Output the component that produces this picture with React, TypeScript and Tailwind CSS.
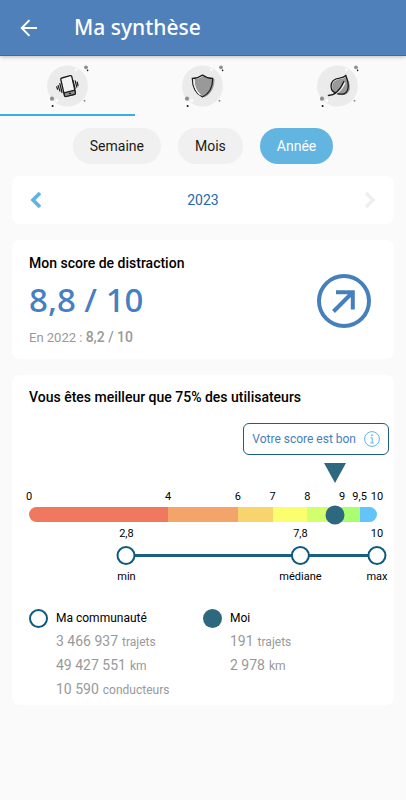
import type { ReactNode } from "react";

type Segment = { from: number; to: number; color: string };

const SEGMENTS: Segment[] = [
  { from: 0, to: 4, color: "#ef785f" },
  { from: 4, to: 6, color: "#f3a468" },
  { from: 6, to: 7, color: "#f8d46e" },
  { from: 7, to: 8, color: "#fbff6e" },
  { from: 8, to: 9, color: "#d1ff6e" },
  { from: 9, to: 9.5, color: "#a9ff70" },
  { from: 9.5, to: 10, color: "#62c4f9" },
];

const TICKS = [0, 4, 6, 7, 8, 9, 9.5, 10];

const COMMUNITY = [
  { value: 2.8, label: "min" },
  { value: 7.8, label: "médiane" },
  { value: 10, label: "max" },
];

const MY_SCORE = 8.8;

const pct = (v: number) => `${v * 10}%`;
const fr = (v: number) => String(v).replace(".", ",");

function Badge({ children }: { children: ReactNode }) {
  return (
    <svg viewBox="0 0 48 48" className="size-12" fill="none" aria-hidden="true">
      <circle cx="23.5" cy="24" r="20.5" fill="#ebebeb" />
      <circle cx="42" cy="5.3" r="1.9" fill="#8f8f8f" />
      <circle cx="43.6" cy="8.4" r="0.8" fill="#111" />
      <circle cx="32.3" cy="7.8" r="1.3" fill="#fff" />
      <circle cx="8" cy="36.7" r="2.1" fill="#8f8f8f" />
      <circle cx="12.8" cy="38.4" r="1.5" fill="#fff" />
      <circle cx="8.6" cy="44" r="1" fill="#111" />
      <circle cx="40.5" cy="38.7" r="1" fill="#8f8f8f" />
      {children}
    </svg>
  );
}

function PhoneIcon() {
  return (
    <Badge>
      <g stroke="#1c1c1c" strokeLinecap="round" strokeLinejoin="round">
        <path d="M17.8 16l8.400-2.300a1.300 1.300 0 0 1 1.600 1l3.600 16a1.300 1.300 0 0 1-1 1.600l-8.400 2.100a1.300 1.300 0 0 1-1.600-1L16.800 17.500a1.300 1.300 0 0 1 1-1.500z" fill="#f4f4f4" strokeWidth="1.300" />
        <path d="M20 30.800l10.700-2.700.7 2.900a1 1 0 0 1-.8 1.300l-8.600 2.200a1 1 0 0 1-1.300-.8z" fill="#8f8f8f" strokeWidth="1.200" />
        <path d="M25.300 31.700l1.200-.3" strokeWidth="1.200" />
        <path d="M15.800 21.500l2.200 9M14.200 23.600l1.700 5.600M12.700 24.800l.8 2.500M28.900 18.300l2.200 8.400M31.200 18.900l1.600 6.300M33.300 20.200l.7 3.400" strokeWidth="1.200" />
      </g>
    </Badge>
  );
}

function ShieldIcon() {
  return (
    <Badge>
      <path d="M24.500 13.500c3 2.300 7 3.600 11 3.600 0 8-2.500 14.500-10 18.200-7-3.700-10-10-10-18.200 3.500 0 6.500-1.300 9-3.600z" fill="#999" />
      <path d="M23.500 12.900c3 2.200 6.400 3.500 10.200 3.500 0 8.200-2.800 14.800-10.200 18.600-7.400-3.800-10.200-10.400-10.200-18.600 3.800 0 7.200-1.300 10.200-3.500z" stroke="#1c1c1c" strokeWidth="1.200" />
      <path d="M14.900 18.300c.3 6.400 2.300 11.500 6.600 14.600" stroke="#f1f1f1" strokeWidth="1.200" />
    </Badge>
  );
}

function LeafIcon() {
  return (
    <Badge>
      <path d="M32.500 14.200c2 4.300 4 8.300 3.300 12.600-.8 4.500-4.400 6.700-8.800 6.300-5.500-.4-9-3.400-8.900-8.400.2-4.600 3.800-7 8.400-7.600 2.400-.3 4.600-1.300 6-2.900z" fill="#999" />
      <path d="M31.800 13.500c2 5 2.900 9 2.200 12.900-.8 4.300-3.700 6.100-7.700 5.700-5.900-.5-9.300-3.300-9.300-7.900.1-4.700 3.500-7.500 8.500-8.100 2.800-.4 5-1.200 6.300-2.600z" stroke="#1c1c1c" strokeWidth="1.300" />
      <path d="M31 20.500c-2 4.600-5 8.600-9 11" stroke="#f1f1f1" strokeWidth="1.600" />
      <path d="M29.800 19.500c-2.800 6.500-7.600 13.800-15.400 14" stroke="#1c1c1c" strokeWidth="1.300" strokeLinecap="round" />
    </Badge>
  );
}

function Chevron({ flip = false }: { flip?: boolean }) {
  return (
    <svg viewBox="0 0 12 18" className="h-[18px] w-3" fill="none" stroke="currentColor" strokeWidth="3.600" aria-hidden="true">
      <path d={flip ? "M2 2l7 7-7 7" : "M10 2L3 9l7 7"} />
    </svg>
  );
}

function Tab({ label, active = false, children }: { label: string; active?: boolean; children: ReactNode }) {
  return (
    <button
      type="button"
      role="tab"
      aria-selected={active}
      aria-label={label}
      className={`flex h-15 flex-1 items-center justify-center border-b-2 pt-0.5 ${active ? "border-[#3baedd]" : "border-transparent"}`}
    >
      {children}
    </button>
  );
}

function Pill({ children, active = false }: { children: ReactNode; active?: boolean }) {
  return (
    <button
      type="button"
      aria-pressed={active}
      className={`h-9 rounded-full px-[17px] text-[14px] ${active ? "bg-[#62b4e1] text-white" : "bg-[#f0f0f0] text-[#1a1a1a]"}`}
    >
      {children}
    </button>
  );
}

function Stat({ value, unit }: { value: string; unit: string }) {
  return (
    <p className="h-6 text-[12px] leading-6 text-[#999]">
      <span className="text-[14px]">{value}</span>
      <span className="ml-1">{unit}</span>
    </p>
  );
}

export default function App() {
  return (
    <div className="min-h-screen bg-[#fafafa] font-['Roboto','Liberation_Sans',sans-serif] text-black">
      <header className="flex h-14 items-center border-b border-[#2f6fae] bg-[#4f80ba] pl-5 text-white shadow-[0_1px_4px_rgba(0,0,0,0.25)]">
        <button type="button" aria-label="Retour" className="mr-9 flex size-[18px] items-center justify-center">
          <svg viewBox="0 0 18 18" className="size-[18px]" fill="none" stroke="currentColor" strokeWidth="1.900" aria-hidden="true">
            <path d="M17 9H2M9.500 1.200L1.700 9l7.800 7.800" />
          </svg>
        </button>
        <h1 className="font-['Noto_Sans','Open_Sans',sans-serif] text-[21px] font-medium">Ma synthèse</h1>
      </header>

      <div role="tablist" className="flex">
        <Tab label="Distraction" active>
          <PhoneIcon />
        </Tab>
        <Tab label="Sécurité">
          <ShieldIcon />
        </Tab>
        <Tab label="Éco-conduite">
          <LeafIcon />
        </Tab>
      </div>

      <main className="px-3 pt-3">
        <div className="flex justify-center gap-[17px]">
          <Pill>Semaine</Pill>
          <Pill>Mois</Pill>
          <Pill active>Année</Pill>
        </div>

        <section className="mt-3 flex h-12 items-center justify-between rounded-lg bg-white px-[18px] text-[14px]">
          <button type="button" aria-label="Année précédente" className="text-[#5fb3e0]">
            <Chevron />
          </button>
          <span className="text-[#2467ad]">2023</span>
          <button type="button" aria-label="Année suivante" disabled className="text-[#efefef]">
            <Chevron flip />
          </button>
        </section>

        <section className="mt-4 flex items-center justify-between rounded-lg bg-white pb-[11px] pl-[17px] pr-[23px] pt-[13px]">
          <div>
            <h2 className="text-[14px] font-medium leading-5">Mon score de distraction</h2>
            <p className="mt-1 font-['Noto_Sans','Open_Sans',sans-serif] text-[33px] font-medium leading-[46px] text-[#4580c2]">8,8 / 10</p>
            <p className="mt-1 text-[13px] leading-5 text-[#999]">
              En 2022 : <strong className="text-[14px] font-medium">8,2 / 10</strong>
            </p>
          </div>
          <svg viewBox="0 0 54 54" className="size-[54px]" fill="none" stroke="#4580bd" strokeWidth="4" role="img" aria-label="En hausse">
            <circle cx="27" cy="27" r="25" />
            <path d="M16.500 37.500L36 18M19 18.200h16.800V35.500" />
          </svg>
        </section>

        <section className="mt-4 rounded-lg bg-white px-[17px] pb-1 pt-3">
          <h2 className="text-[14px] font-medium leading-5">Vous êtes meilleur que 75% des utilisateurs</h2>

          <div className="-mr-3 mt-4 flex justify-end">
            <button type="button" className="flex h-8 items-center gap-2 rounded-md border border-[#1d5f80] px-2 text-[12px] text-[#4580bd]">
              Votre score est bon
              <svg viewBox="0 0 16 16" className="size-4" fill="none" stroke="#62b4e1" aria-hidden="true">
                <circle cx="8" cy="8" r="7.400" />
                <path d="M6.500 6.800h1.700v5M6.300 11.900h3.600" />
                <circle cx="8" cy="4.200" r="0.500" fill="#62b4e1" />
              </svg>
            </button>
          </div>

          <div className="relative mt-2 h-5">
            <svg viewBox="0 0 22 20" className="absolute h-5 w-[22px] -translate-x-1/2" style={{ left: pct(MY_SCORE) }} aria-hidden="true">
              <path d="M0 0h22L11 20z" fill="#2e687f" />
            </svg>
          </div>

          <div className="relative mt-1 h-5 text-[11px] leading-5">
            {TICKS.map((t) => (
              <span key={t} className="absolute -translate-x-1/2" style={{ left: pct(t) }}>
                {fr(t)}
              </span>
            ))}
          </div>

          <div className="relative">
            <div className="flex h-[15px] overflow-hidden rounded-full">
              {SEGMENTS.map((s) => (
                <div key={s.from} style={{ flexGrow: s.to - s.from, flexBasis: 0, backgroundColor: s.color }} />
              ))}
            </div>
            <span
              className="absolute top-1/2 size-[19px] -translate-x-1/2 -translate-y-1/2 rounded-full bg-[#2e687f]"
              style={{ left: pct(MY_SCORE) }}
            />
          </div>

          <div className="relative mt-1 h-16 text-[11px]">
            <div className="absolute right-0 top-7 h-[3px] bg-[#1d5f80]" style={{ left: pct(COMMUNITY[0].value) }} />
            {COMMUNITY.map((m) => (
              <div key={m.label} className="absolute flex -translate-x-1/2 flex-col items-center" style={{ left: pct(m.value) }}>
                <span className="leading-4">{fr(m.value)}</span>
                <span className="my-1 size-[19px] rounded-full border-2 border-[#0e5a7c] bg-white" />
                <span className="leading-4">{m.label}</span>
              </div>
            ))}
          </div>

          <div className="mt-[17px] grid grid-cols-2 text-[12px]">
            <div className="flex gap-2">
              <span className="mt-0.5 size-[19px] shrink-0 rounded-full border-2 border-[#0e5a7c] bg-white" />
              <div>
                <h3 className="leading-[22px]">Ma communauté</h3>
                <Stat value="3 466 937" unit="trajets" />
                <Stat value="49 427 551" unit="km" />
                <Stat value="10 590" unit="conducteurs" />
              </div>
            </div>
            <div className="flex gap-2">
              <span className="mt-0.5 size-[19px] shrink-0 rounded-full bg-[#2e687f]" />
              <div>
                <h3 className="leading-[22px]">Moi</h3>
                <Stat value="191" unit="trajets" />
                <Stat value="2 978" unit="km" />
              </div>
            </div>
          </div>
        </section>
      </main>
    </div>
  );
}
